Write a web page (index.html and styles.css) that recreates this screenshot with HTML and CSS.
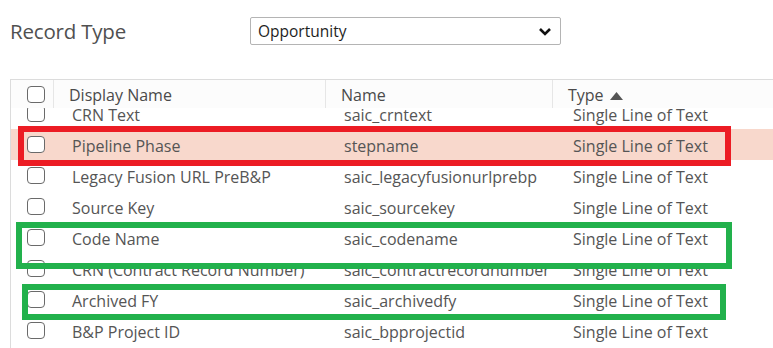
FILE: index.html
```html
<!DOCTYPE html>
<html lang="en">
<head>
    <meta charset="UTF-8">
    <meta name="viewport" content="width=device-width, initial-scale=1.0">
    <title>Fields</title>
    <link rel="stylesheet" href="styles.css">
</head>
<body>
  <div class="page">
    <!-- record type picker -->
    <div class="field-row">
      <span class="field-label">Record Type</span>
      <div class="select">
        <span>Opportunity</span>
        <svg class="chevron" width="14" height="10" viewBox="0 0 14 10"><polyline points="2,2 7,7 12,2" fill="none" stroke="#111" stroke-width="2.6"/></svg>
      </div>
    </div>

    <!-- fields grid -->
    <div class="grid">
      <div class="grid-head">
        <div class="cell chk-cell"><span class="chk"></span></div>
        <div class="cell sep">Display Name</div>
        <div class="cell sep">Name</div>
        <div class="cell sep">Type <svg class="sort" width="13" height="8" viewBox="0 0 13 8"><polygon points="6.5,0 13,8 0,8" fill="#555"/></svg></div>
      </div>
      <div class="grid-body">
        <div class="rows">
          <div class="row"><div class="cell chk-cell"><span class="chk"></span></div><div class="cell">CRN Text</div><div class="cell">saic_crntext</div><div class="cell">Single Line of Text</div></div>
          <div class="row selected"><div class="cell chk-cell"><span class="chk"></span></div><div class="cell">Pipeline Phase</div><div class="cell">stepname</div><div class="cell">Single Line of Text</div></div>
          <div class="row"><div class="cell chk-cell"><span class="chk"></span></div><div class="cell">Legacy Fusion URL PreB&amp;P</div><div class="cell">saic_legacyfusionurlprebp</div><div class="cell">Single Line of Text</div></div>
          <div class="row"><div class="cell chk-cell"><span class="chk"></span></div><div class="cell">Source Key</div><div class="cell">saic_sourcekey</div><div class="cell">Single Line of Text</div></div>
          <div class="row"><div class="cell chk-cell"><span class="chk"></span></div><div class="cell">Code Name</div><div class="cell">saic_codename</div><div class="cell">Single Line of Text</div></div>
          <div class="row"><div class="cell chk-cell"><span class="chk"></span></div><div class="cell">CRN (Contract Record Number)</div><div class="cell">saic_contractrecordnumber</div><div class="cell">Single Line of Text</div></div>
          <div class="row"><div class="cell chk-cell"><span class="chk"></span></div><div class="cell">Archived FY</div><div class="cell">saic_archivedfy</div><div class="cell">Single Line of Text</div></div>
          <div class="row"><div class="cell chk-cell"><span class="chk"></span></div><div class="cell">B&amp;P Project ID</div><div class="cell">saic_bpprojectid</div><div class="cell">Single Line of Text</div></div>
        </div>
      </div>
    </div>

    <!-- annotation frames drawn over the grid -->
    <div class="mark mark-red"></div>
    <div class="mark mark-green-1"></div>
    <div class="mark mark-green-2"></div>
  </div>
</body>
</html>
```

FILE: styles.css
```css
body{
  margin: 0;
  background: #fff;
  font-family: "Open Sans", "Noto Sans", sans-serif;
  color: #555;
}
.page{
  position: relative;
  width: 773px;
  height: 348px;
  overflow: hidden;
}

/* record type row */
.field-row{
  display: flex;
  align-items: center;
  padding: 17px 0 0 10px;
  height: 28px;
}
.field-label{
  width: 240px;
  font-size: 20.5px;
  letter-spacing: -0.2px;
  color: #505050;
}
.select{
  box-sizing: border-box;
  width: 311px;
  height: 28px;
  border: 1px solid #b4b4b4;
  border-radius: 2px;
  display: flex;
  align-items: center;
  justify-content: space-between;
  padding: 0 8px 0 7px;
  font-size: 15.5px;
  color: #1e1e1e;
}
.chevron{
  margin-top: 1px;
}

/* grid */
.grid{
  margin: 34px 0 0 10px;
  border-top: 1px solid #dcdcdc;
  border-left: 1px solid #dcdcdc;
}
.grid-head,
.row{
  display: grid;
  grid-template-columns: 42px 272px 227px 1fr;
  align-items: center;
}
.grid-head{
  height: 28px;
  background: #fcfcfc;
  color: #4a4a4a;
}
.cell{
  font-size: 16px;
  padding-left: 16px;
  white-space: nowrap;
  overflow: hidden;
}
.grid-head .cell{
  height: 28px;
  line-height: 30px;
}
.grid-head .sep{
  border-left: 1px solid #e6e6e6;
  padding-left: 15px;
}
.sort{
  margin-left: 2px;
  vertical-align: 1px;
}
.chk-cell{
  padding-left: 16px;
  display: flex;
  align-items: center;
}
.chk{
  display: block;
  box-sizing: border-box;
  width: 18px;
  height: 17px;
  border: 1.6px solid #6a6a6a;
  border-radius: 4px;
  background: #fff;
}
.grid-body{
  height: 240px;
  overflow: hidden;
}
.rows{
  margin-top: -10px;
}
.row{
  height: 31px;
}
.row .cell{
  line-height: 34px;
  height: 31px;
}
.row .cell:nth-child(2),
.row .cell:nth-child(3){
  padding-left: 19px;
}
.row .cell:nth-child(4){
  padding-left: 21px;
}
.row .chk-cell{
  line-height: normal;
}
.row.selected{
  background: #f8d8cc;
}

/* annotation frames */
.mark{
  position: absolute;
  box-sizing: border-box;
  border: 6px solid;
}
.mark-red{
  border-color: #ec1c24;
  left: 18px;
  top: 126px;
  width: 713px;
  height: 40px;
}
.mark-green-1{
  border-color: #22b14c;
  left: 16px;
  top: 222px;
  width: 716px;
  height: 47px;
}
.mark-green-2{
  border-color: #22b14c;
  left: 22px;
  top: 284px;
  width: 704px;
  height: 36px;
}
```
